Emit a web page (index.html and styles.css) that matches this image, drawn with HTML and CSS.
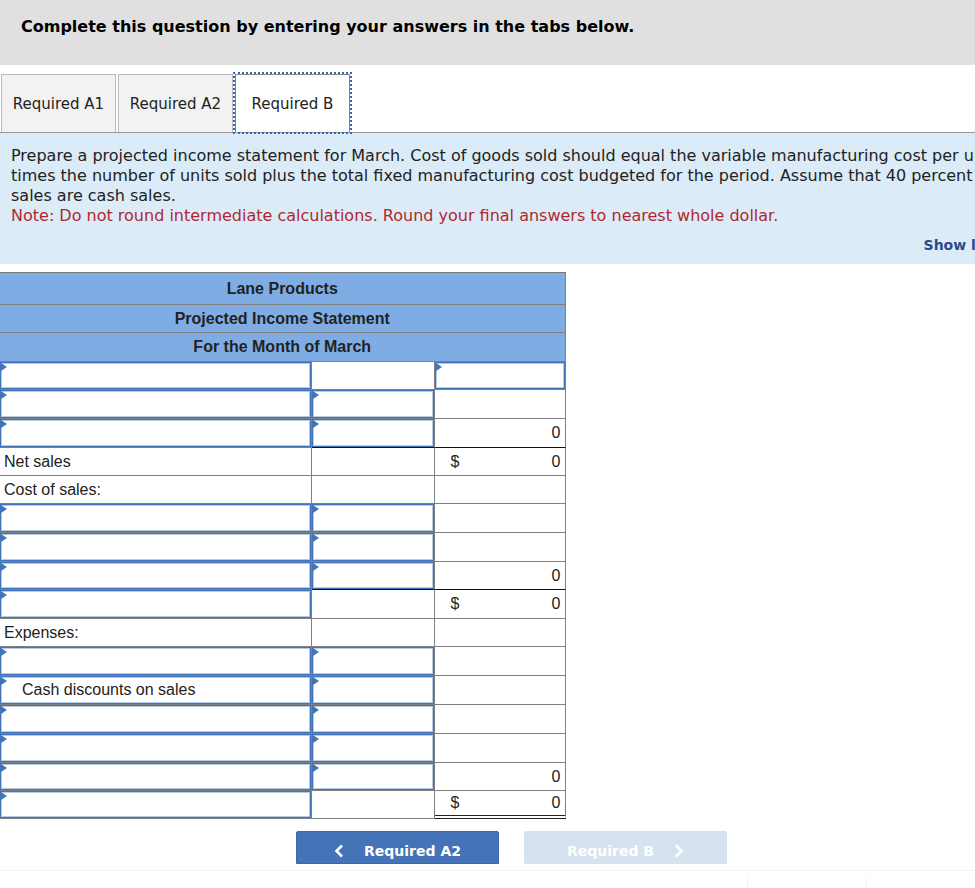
FILE: index.html
```html
<!DOCTYPE html>
<html lang="en">
<head>
    <meta charset="UTF-8">
    <meta name="viewport" content="width=device-width, initial-scale=1.0">
    <title>Projected Income Statement</title>
    <link rel="stylesheet" href="styles.css">
</head>
<body>

    <div class="header">
        <h1>Complete this question by entering your answers in the tabs below.</h1>
    </div>

    <div class="tabs" role="tablist">
        <button type="button" class="tab" role="tab">Required A1</button>
        <button type="button" class="tab" role="tab">Required A2</button>
        <button type="button" class="tab active" role="tab" aria-selected="true">Required B</button>
    </div>

    <div class="instructions">
        <p>Prepare a projected income statement for March. Cost of goods sold should equal the variable manufacturing cost per unit<br>
        times the number of units sold plus the total fixed manufacturing cost budgeted for the period. Assume that 40 percent of<br>
        sales are cash sales.</p>
        <p class="note">Note: Do not round intermediate calculations. Round your final answers to nearest whole dollar.</p>
        <a href="#" class="show-less">Show less</a>
    </div>

    <table class="statement">
        <colgroup>
            <col>
            <col class="col-detail">
            <col class="col-total">
        </colgroup>
        <thead>
            <tr class="title"><th colspan="3">Lane Products</th></tr>
            <tr><th colspan="3">Projected Income Statement</th></tr>
            <tr class="tall"><th colspan="3">For the Month of March</th></tr>
        </thead>
        <tbody>
            <tr>
                <td class="entry"><input type="text" aria-label="Sales item 1"></td>
                <td></td>
                <td class="entry"><input type="text" aria-label="Sales total"></td>
            </tr>
            <tr class="tall">
                <td class="entry"><input type="text" aria-label="Sales item 2"></td>
                <td class="entry"><input type="text" aria-label="Sales amount 2"></td>
                <td></td>
            </tr>
            <tr class="tall">
                <td class="entry"><input type="text" aria-label="Sales item 3"></td>
                <td class="entry sum"><input type="text" aria-label="Sales amount 3"></td>
                <td class="sum"><div class="amount"><span></span><span>0</span></div></td>
            </tr>
            <tr>
                <td>Net sales</td>
                <td></td>
                <td><div class="amount"><span>$</span><span>0</span></div></td>
            </tr>
            <tr>
                <td>Cost of sales:</td>
                <td></td>
                <td></td>
            </tr>
            <tr class="tall">
                <td class="entry"><input type="text" aria-label="Cost item 1"></td>
                <td class="entry"><input type="text" aria-label="Cost amount 1"></td>
                <td></td>
            </tr>
            <tr class="tall">
                <td class="entry"><input type="text" aria-label="Cost item 2"></td>
                <td class="entry"><input type="text" aria-label="Cost amount 2"></td>
                <td></td>
            </tr>
            <tr>
                <td class="entry"><input type="text" aria-label="Cost item 3"></td>
                <td class="entry sum"><input type="text" aria-label="Cost amount 3"></td>
                <td class="sum"><div class="amount"><span></span><span>0</span></div></td>
            </tr>
            <tr class="tall">
                <td class="entry"><input type="text" aria-label="Margin item"></td>
                <td></td>
                <td><div class="amount"><span>$</span><span>0</span></div></td>
            </tr>
            <tr>
                <td>Expenses:</td>
                <td></td>
                <td></td>
            </tr>
            <tr class="tall">
                <td class="entry"><input type="text" aria-label="Expense item 1"></td>
                <td class="entry"><input type="text" aria-label="Expense amount 1"></td>
                <td></td>
            </tr>
            <tr class="tall">
                <td class="entry"><input type="text" aria-label="Expense item 2" value="Cash discounts on sales"></td>
                <td class="entry"><input type="text" aria-label="Expense amount 2"></td>
                <td></td>
            </tr>
            <tr class="tall">
                <td class="entry"><input type="text" aria-label="Expense item 3"></td>
                <td class="entry"><input type="text" aria-label="Expense amount 3"></td>
                <td></td>
            </tr>
            <tr class="tall">
                <td class="entry"><input type="text" aria-label="Expense item 4"></td>
                <td class="entry"><input type="text" aria-label="Expense amount 4"></td>
                <td></td>
            </tr>
            <tr>
                <td class="entry"><input type="text" aria-label="Expense item 5"></td>
                <td class="entry"><input type="text" aria-label="Expense amount 5"></td>
                <td><div class="amount"><span></span><span>0</span></div></td>
            </tr>
            <tr>
                <td class="entry"><input type="text" aria-label="Income item"></td>
                <td></td>
                <td class="grand"><div class="amount"><span>$</span><span>0</span></div></td>
            </tr>
        </tbody>
    </table>

    <div class="nav">
        <button type="button" class="nav-button">
            <svg width="10" height="14" viewBox="0 0 10 14"><path d="M8 1.5 L2.5 7 L8 12.5" fill="none" stroke="#fff" stroke-width="2.6"/></svg>
            Required A2
        </button>
        <button type="button" class="nav-button" disabled>
            Required B
            <svg width="10" height="14" viewBox="0 0 10 14"><path d="M2 1.5 L7.5 7 L2 12.5" fill="none" stroke="#fff" stroke-width="2.6"/></svg>
        </button>
    </div>

    <div class="footer">
        <div class="footer-cell"></div>
    </div>

</body>
</html>
```
FILE: styles.css
```css
* {
    box-sizing: border-box;
}

body {
    margin: 0;
    background-color: #fff;
    color: #222;
    font-family: Verdana, "DejaVu Sans", sans-serif;
    font-size: 16px;
    overflow: hidden;
}

.header {
    background-color: #e0e0e0;
    padding: 17px 21px 28px;
}

h1 {
    margin: 0;
    color: #000;
    font-size: 16px;
    line-height: 20px;
}

.tabs {
    display: flex;
    gap: 2px;
    padding: 9px 1px 0;
    border-bottom: 1px solid #999;
}

.tab {
    width: 115px;
    height: 58px;
    padding: 0;
    border: 1px solid #bbb;
    border-bottom: none;
    background-color: #f2f2f2;
    color: #222;
    font-family: inherit;
    font-size: 15px;
}

.tab.active {
    background-color: #fff;
    border-color: #888;
    outline: 2px dotted #2f68bd;
}

.instructions {
    width: calc(100% + 38px);
    padding: 13px 11px 9px;
    background-color: #dbecf8;
    line-height: 20px;
    white-space: nowrap;
}

.instructions p {
    margin: 0;
}

.instructions .note {
    color: #b0282f;
}

.show-less {
    display: block;
    margin-top: 9px;
    color: #2b4a8b;
    font-size: 14px;
    font-weight: bold;
    text-align: right;
    text-decoration: none;
}

.statement {
    width: 58%;
    margin-top: 8px;
    border-top: 1px solid #777;
    border-spacing: 0;
    table-layout: fixed;
    font-family: Arial, "Liberation Sans", sans-serif;
    line-height: 20px;
}

.col-detail {
    width: 123px;
}

.col-total {
    width: 131px;
}

.statement th,
.statement td {
    height: 28px;
    padding: 0 4px;
    border: solid #808080;
    border-width: 0 1px 1px 0;
}

.statement th {
    background-color: #80ace4;
}

.statement .title th {
    height: 32px;
}

.statement .tall th,
.statement .tall td {
    height: 29px;
}

.statement td.entry {
    position: relative;
    padding: 0;
}

/* answer marker in the corner of each entry cell */
.entry::before {
    content: "";
    position: absolute;
    top: 1px;
    left: 1px;
    border-top: 4px solid transparent;
    border-bottom: 4px solid transparent;
    border-left: 6px solid #4373b9;
}

.entry input {
    display: block;
    width: 100%;
    height: 27px;
    padding: 0 21px;
    border: 1px solid #4373b9;
    border-radius: 0;
    background-color: #fff;
    box-shadow: inset 0 0 0 1px #b4cbea;
    color: #222;
    font-family: inherit;
    font-size: 16px;
}

.tall .entry input {
    height: 28px;
}

.statement td.sum {
    border-bottom-color: #111;
}

.statement td.grand {
    border-bottom: 4px double #222;
}

.amount {
    display: flex;
    justify-content: space-between;
    padding-left: 12px;
}

.nav {
    display: flex;
    gap: 25px;
    justify-content: center;
    padding: 12px 0 6px 48px;
}

.nav-button {
    display: flex;
    align-items: center;
    justify-content: center;
    gap: 20px;
    width: 203px;
    height: 33px;
    padding: 6px 0 0;
    border: 1px solid #3a68ab;
    border-radius: 2px 2px 0 0;
    background-color: #4473b8;
    color: #fff;
    font-family: inherit;
    font-size: 14px;
    font-weight: bold;
}

.nav-button:disabled {
    border-color: #d7e2f0;
    background-color: #d7e2f0;
}

.footer {
    display: flex;
    justify-content: flex-end;
    padding: 6px 108px 0 0;
    border-top: 1px solid #f2f2f2;
}

.footer-cell {
    width: 120px;
    height: 20px;
    border: solid #f2f2f2;
    border-width: 0 1px;
}
```
